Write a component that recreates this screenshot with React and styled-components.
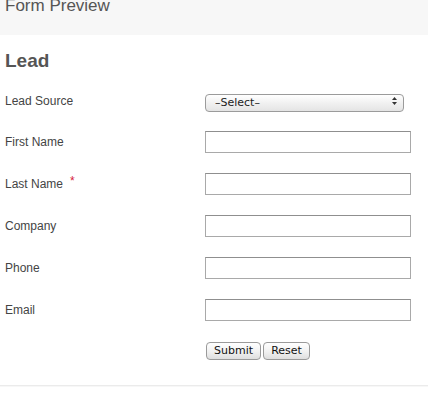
import styled, { createGlobalStyle } from "styled-components"

const GlobalStyle = createGlobalStyle`
  html, body {
    margin: 0;
    padding: 0;
    background: #ffffff;
  }
  body {
    font-family: "Liberation Sans", Arial, sans-serif;
    color: #444444;
  }
`

const Page = styled.div`
  width: 428px;
  height: 404px;
  overflow: hidden;
  background: #ffffff;
`

const Header = styled.div`
  height: 35px;
  padding: 0 5px;
  background: #f7f7f7;
  font-size: 17px;
  line-height: 12px;
  color: #555555;
`

const Section = styled.div`
  padding: 0 5px;
`

const Title = styled.h2`
  margin: 14px 0 8px;
  font-size: 19px;
  line-height: 24px;
  font-weight: bold;
  color: #555555;
`

const Row = styled.div`
  display: flex;
  align-items: center;
  height: ${(p) => p.$height}px;
`

const Label = styled.label`
  width: 200px;
  flex-shrink: 0;
  font-size: 12px;
  line-height: 14px;
  color: #444444;
`

const Required = styled.span`
  margin-left: 7px;
  color: #d6203a;
  font-size: 12px;
  position: relative;
  top: -3px;
`

const TextInput = styled.input`
  box-sizing: border-box;
  width: 206px;
  height: 22px;
  margin: 0;
  padding: 2px 4px;
  border: 1px solid #a9a9a9;
  border-top-color: #8f8f8f;
  background: #ffffff;
  font-family: "DejaVu Sans", sans-serif;
  font-size: 11px;
`

const SelectWrap = styled.div`
  position: relative;
  width: 199px;
  height: 18px;
`

const Select = styled.select`
  box-sizing: border-box;
  width: 100%;
  height: 100%;
  margin: 0;
  padding: 0 20px 0 9px;
  appearance: none;
  -webkit-appearance: none;
  border: 1px solid #9b9b9b;
  border-radius: 4px;
  background: linear-gradient(#ffffff, #f1f1f1 50%, #e4e4e4);
  font-family: "DejaVu Sans", sans-serif;
  font-size: 11px;
  line-height: 16px;
  color: #222222;
`

const Arrows = styled.svg`
  position: absolute;
  right: 7px;
  top: 5px;
  pointer-events: none;
`

const ButtonRow = styled.div`
  display: flex;
  gap: 2px;
  margin: 11px 0 0 201px;
`

const Button = styled.button`
  box-sizing: border-box;
  height: 18px;
  width: ${(p) => p.$width}px;
  margin: 0;
  padding: 0;
  border: 1px solid #9a9a9a;
  border-radius: 4px;
  background: linear-gradient(#ffffff, #f2f2f2 50%, #dedede);
  font-family: "DejaVu Sans", sans-serif;
  font-size: 11px;
  line-height: 16px;
  color: #111111;
`

const Divider = styled.div`
  margin-top: 25px;
  height: 1px;
  background: #ebebeb;
  border-bottom: 1px solid #f7f7f7;
`

const fields = [
  { label: "First Name" },
  { label: "Last Name", required: true },
  { label: "Company" },
  { label: "Phone" },
  { label: "Email" },
]

export default function App() {
  return (
    <Page>
      <GlobalStyle />
      <Header>Form Preview</Header>
      <Section>
        <Title>Lead</Title>
        <Row $height={40}>
          <Label>Lead Source</Label>
          <SelectWrap>
            <Select defaultValue="">
              <option value="">–Select–</option>
            </Select>
            <Arrows width="5" height="8" viewBox="0 0 5 8">
              <path d="M2.5 0 L5 3 H0 Z" fill="#333" />
              <path d="M2.5 8 L5 5 H0 Z" fill="#333" />
            </Arrows>
          </SelectWrap>
        </Row>
        {fields.map((f) => (
          <Row key={f.label} $height={42}>
            <Label>
              {f.label}
              {f.required && <Required>*</Required>}
            </Label>
            <TextInput type="text" />
          </Row>
        ))}
        <ButtonRow>
          <Button $width={55}>Submit</Button>
          <Button $width={47}>Reset</Button>
        </ButtonRow>
      </Section>
      <Divider />
    </Page>
  )
}
